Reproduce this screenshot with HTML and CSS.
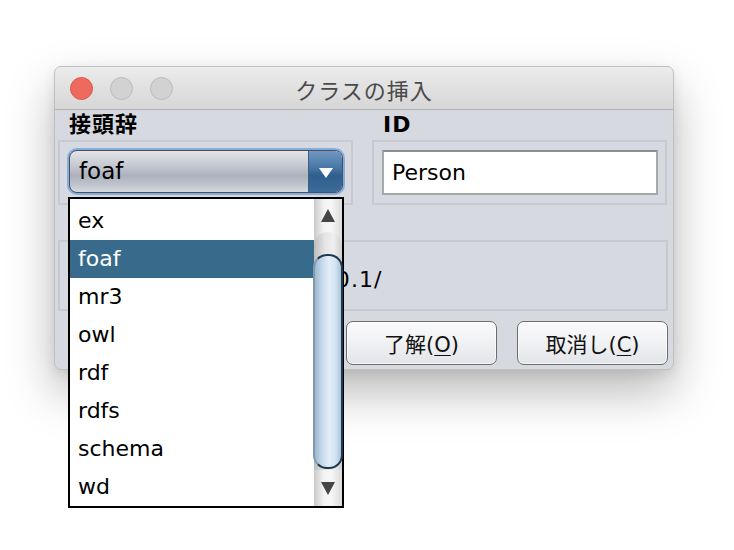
FILE: index.html
```html
<!DOCTYPE html>
<html lang="ja">
<head>
<meta charset="utf-8">
<title>クラスの挿入</title>
<link rel="stylesheet" href="styles.css">
</head>
<body>
<div class="window">
  <div class="titlebar">
    <div class="lights">
      <span class="light red"></span>
      <span class="light"></span>
      <span class="light"></span>
    </div>
    <div class="title">クラスの挿入</div>
    <div></div>
  </div>
  <div class="content">
    <div class="row1">
      <div class="col">
        <div class="label">接頭辞</div>
        <div class="panel panel-prefix">
          <div class="combo-ring">
            <div class="combo">
              <span class="combo-text">foaf</span>
              <span class="combo-btn"><span class="tri-down-white"></span></span>
            </div>
          </div>
        </div>
      </div>
      <div class="col">
        <div class="label">ID</div>
        <div class="panel panel-id">
          <div class="textfield">Person</div>
        </div>
      </div>
    </div>
    <div class="panel panel-ns">
      <span class="ns-text">http://xmlns.com/foaf/0.1/</span>
    </div>
    <div class="buttons">
      <button class="btn">了解(<u>O</u>)</button>
      <button class="btn">取消し(<u>C</u>)</button>
    </div>
  </div>

  <div class="popup">
    <ul class="list">
      <li>ex</li>
      <li class="selected">foaf</li>
      <li>mr3</li>
      <li>owl</li>
      <li>rdf</li>
      <li>rdfs</li>
      <li>schema</li>
      <li>wd</li>
    </ul>
    <div class="scrollbar">
      <div class="arrow-up"><span class="tri-up"></span></div>
      <div class="track">
        <div class="thumb"></div>
      </div>
      <div class="arrow-down"><span class="tri-down"></span></div>
    </div>
  </div>
</div>
</body>
</html>
```

FILE: styles.css
```css
* { box-sizing: border-box; }

html, body {
  margin: 0;
  padding: 0;
  background: #ffffff;
  width: 734px;
  height: 550px;
  overflow: hidden;
}

body {
  font-family: "DejaVu Sans", "Noto Sans CJK JP", sans-serif;
  color: #000;
  padding-top: 66px;
  padding-left: 54px;
}

.window {
  position: relative;
  width: 620px;
  height: 304px;
  border-radius: 7px;
  background: #d7d9e1;
  border: 1px solid #bfc0c4;
  box-shadow: 0 22px 48px rgba(0, 0, 0, 0.28), 0 4px 12px rgba(0, 0, 0, 0.08);
}

.titlebar {
  height: 43px;
  display: grid;
  grid-template-columns: 1fr auto 1fr;
  align-items: center;
  background: linear-gradient(#ececec, #d6d6d6);
  border-bottom: 1px solid #b2b2b2;
  border-radius: 6px 6px 0 0;
}

.lights {
  display: flex;
  gap: 17px;
  padding-left: 15px;
}

.light {
  width: 23px;
  height: 23px;
  border-radius: 50%;
  background: #d2d2d2;
  border: 1px solid #bcbcbc;
}

.light.red {
  background: #ee6a5e;
  border-color: #d9584d;
}

.title {
  font-family: "Noto Sans CJK JP", sans-serif;
  font-size: 22px;
  letter-spacing: 1px;
  color: #4a4a4a;
  padding-top: 1px;
}

.content {
  padding: 0 5px 0 3px;
}

.row1 {
  display: grid;
  grid-template-columns: 295px 295px;
  column-gap: 19px;
}

.label {
  font-family: "DejaVu Sans", "Noto Sans CJK JP", sans-serif;
  font-weight: bold;
  font-size: 22px;
  letter-spacing: 1px;
  height: 30px;
  line-height: 30px;
  padding-left: 11px;
}

.panel {
  border: 2px solid #c8cacf;
}

.panel-prefix {
  height: 65px;
  padding: 6px 6px 0 7px;
}

.combo-ring {
  height: 47px;
  border-radius: 10px;
  padding: 2px;
  background: #86ade0;
}

.combo {
  height: 43px;
  border-radius: 8px;
  border: 1px solid #4c4f57;
  display: flex;
  overflow: hidden;
  background: linear-gradient(#e3e5ea 0%, #c6c9d1 35%, #adb1bc 60%, #c2c6cf 85%, #d7dae0 100%);
}

.combo-text {
  flex: 1;
  font-size: 23px;
  line-height: 41px;
  padding-left: 9px;
}

.combo-btn {
  width: 34px;
  border-left: 1px solid #3c5f84;
  background: linear-gradient(#6f98c2 0%, #4978a6 40%, #2f5f8d 60%, #3e6c9a 100%);
  display: flex;
  align-items: center;
  justify-content: center;
}

.tri-down-white {
  width: 0;
  height: 0;
  border-left: 7px solid transparent;
  border-right: 7px solid transparent;
  border-top: 10px solid #ffffff;
  margin-top: 2px;
}

.panel-id {
  height: 65px;
  padding: 8px 7px 0 8px;
}

.textfield {
  height: 45px;
  background: #fff;
  border: 2px solid #a8a8a8;
  border-top-color: #8e8e8e;
  font-size: 22px;
  line-height: 41px;
  padding-left: 8px;
}

.panel-ns {
  margin-top: 35px;
  height: 71px;
  padding-left: 7px;
  font-size: 22px;
  letter-spacing: 1.1px;
  line-height: 67px;
  padding-top: 4px;
  white-space: nowrap;
  overflow: hidden;
}

.buttons {
  display: flex;
  justify-content: flex-end;
  gap: 20px;
  margin-top: 10px;
}

.btn {
  width: 151px;
  height: 44px;
  border-radius: 7px;
  border: 1px solid #6c6c6c;
  background: linear-gradient(#fbfbfc 0%, #f0f1f3 50%, #e2e4e8 100%);
  box-shadow: inset 0 0 0 1px rgba(255, 255, 255, 0.7);
  font-family: "DejaVu Sans", "Noto Sans CJK JP", sans-serif;
  font-size: 21px;
  color: #111;
  padding: 0;
}

.btn u {
  text-decoration-thickness: 1px;
  text-underline-offset: 3px;
}

/* dropdown popup */
.popup {
  position: absolute;
  left: 13px;
  top: 130px;
  width: 276px;
  height: 311px;
  border: 2px solid #000;
  background: #fff;
  display: flex;
  z-index: 5;
}

.list {
  list-style: none;
  margin: 0;
  padding: 3px 0 0 0;
  flex: 1;
}

.list li {
  height: 38px;
  line-height: 38px;
  font-size: 22px;
  padding-left: 8px;
}

.list li.selected {
  background: #386a8b;
  color: #fff;
}

.scrollbar {
  width: 28px;
  display: flex;
  flex-direction: column;
  background: linear-gradient(90deg, #c9c9c9 0%, #f3f3f3 35%, #f7f7f7 60%, #dcdcdc 100%);
}

.arrow-up, .arrow-down {
  height: 33px;
  display: flex;
  align-items: center;
  justify-content: center;
}

.arrow-down {
  height: 36px;
}

.tri-up {
  width: 0;
  height: 0;
  border-left: 7px solid transparent;
  border-right: 7px solid transparent;
  border-bottom: 13px solid #454545;
}

.tri-down {
  width: 0;
  height: 0;
  border-left: 7px solid transparent;
  border-right: 7px solid transparent;
  border-top: 13px solid #454545;
}

.track {
  flex: 1;
  padding-top: 22px;
  background: linear-gradient(90deg, #bcbcbc 0%, #e6e6e6 40%, #efefef 70%, #cfcfcf 100%);
  border-radius: 14px 14px 0 0;
}

.thumb {
  height: 215px;
  margin-left: -1px;
  margin-right: -1px;
  border-radius: 14px;
  border: 2px solid #1d3950;
  border-left-color: #7f9ab2;
  background: linear-gradient(90deg, #9fb8cf 0%, #c3d7e8 25%, #e3eef8 55%, #d0e2f1 80%, #a9c2d8 100%);
}
```
